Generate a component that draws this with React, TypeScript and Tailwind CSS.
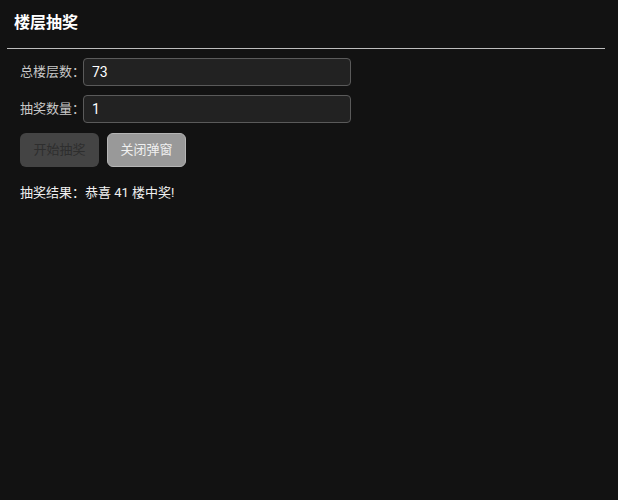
import React from 'react';

const font = { fontFamily: 'Roboto, "Noto Sans CJK SC", sans-serif' };

export default function App() {
  return (
    <div className="w-[618px] h-[500px] bg-[#121212] text-[#e5e5e5]" style={font}>
      {/* Header */}
      <div className="px-[14px] pt-[12px] pb-[14px]">
        <h2 className="text-[16px] leading-[22px] font-bold text-white">楼层抽奖</h2>
      </div>
      <div className="ml-[7px] mr-[13px] h-px bg-[#bdbdbd]" />

      {/* Form */}
      <div className="px-[20px] pt-[9px]">
        <div className="flex items-center h-[28px]">
          <label className="w-[63px] shrink-0 whitespace-nowrap text-[13px] text-[#c8c8c8]">总楼层数：</label>
          <input
            defaultValue="73"
            className="w-[268px] h-[28px] px-[8px] rounded-[4px] border border-[#5a5a5a] bg-[#222222] text-[14px] text-white outline-none"
          />
        </div>
        <div className="flex items-center h-[28px] mt-[9px]">
          <label className="w-[63px] shrink-0 whitespace-nowrap text-[13px] text-[#c8c8c8]">抽奖数量：</label>
          <input
            defaultValue="1"
            className="w-[268px] h-[28px] px-[8px] rounded-[4px] border border-[#5a5a5a] bg-[#222222] text-[14px] text-white outline-none"
          />
        </div>

        {/* Buttons */}
        <div className="flex gap-[8px] mt-[10px]">
          <button
            disabled
            className="w-[79px] h-[34px] rounded-[6px] bg-[#444444] text-[13px] text-[#2e2e2e]"
          >
            开始抽奖
          </button>
          <button className="w-[79px] h-[34px] rounded-[6px] border border-[#b5b5b5] bg-[#999999] text-[13px] text-[#f0f0f0]">
            关闭弹窗
          </button>
        </div>

        <p className="mt-[17px] text-[13px] leading-[18px] text-[#f0f0f0]">抽奖结果：恭喜 41 楼中奖!</p>
      </div>
    </div>
  );
}
